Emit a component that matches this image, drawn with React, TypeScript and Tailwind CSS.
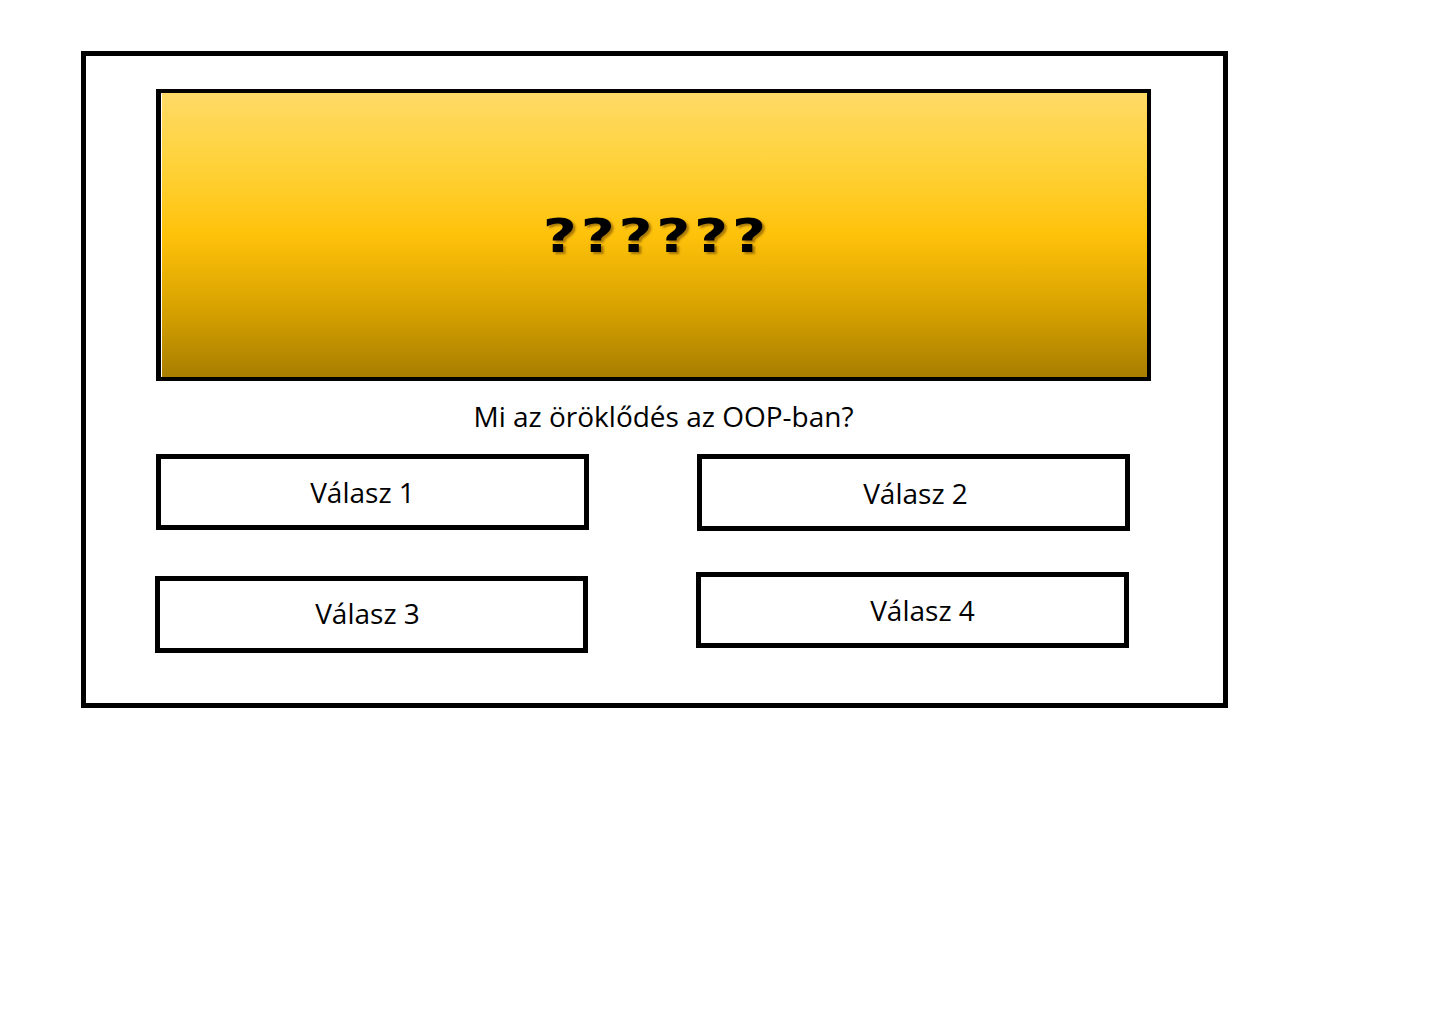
const answers = [
  { label: 'Válasz 1', box: 'w-[433px] h-[76px]', text: 'pr-[20px]' },
  { label: 'Válasz 2', box: 'w-[433px] h-[77px] ml-[108px]', text: 'pl-[4px]' },
];

const answers2 = [
  { label: 'Válasz 3', box: 'w-[433px] h-[77px] mt-[45px] ml-[-1px]', text: 'pr-[8px] pb-[3px]' },
  { label: 'Válasz 4', box: 'w-[433px] h-[76px] mt-[41px] ml-[108px]', text: 'pl-[20px]' },
];

function AnswerBox({ label, box, text }: { label: string; box: string; text: string }) {
  return (
    <button
      className={`${box} border-[5px] border-black bg-white flex items-center justify-center ${text} text-[28px] text-black font-['Open_Sans',sans-serif] cursor-pointer`}
    >
      {label}
    </button>
  );
}

export default function App() {
  return (
    <div className="min-h-[1024px] bg-white pl-[81px] pt-[51px]">
      {/* kvíz keret */}
      <div className="w-[1147px] h-[657px] border-[5px] border-black pl-[70px] pt-[33px]">
        {/* kérdés doboz */}
        <div className="w-[995px] h-[292px] border-4 border-l-[5px] border-black shadow-[inset_1px_0_0_#ffffff] bg-[linear-gradient(to_bottom,#ffda66_0%,#ffd23a_25%,#ffc20a_50%,#d9a300_75%,#a87e00_100%)] flex items-center justify-center pt-[2px]">
          <span className="inline-block pl-[4px] scale-x-[1.25] text-[47px] font-bold tracking-[3px] text-black font-['DejaVu_Sans',sans-serif] [text-shadow:2px_2px_2px_rgba(110,70,0,0.6)]">
            ??????
          </span>
        </div>

        <p className="w-[995px] mt-[16px] pl-[20px] text-center text-[28px] leading-[38px] text-black font-['Open_Sans',sans-serif]">
          Mi az öröklődés az OOP-ban?
        </p>

        <div className="flex items-start mt-[19px]">
          {answers.map((a) => (
            <AnswerBox key={a.label} {...a} />
          ))}
        </div>
        <div className="flex items-start">
          {answers2.map((a) => (
            <AnswerBox key={a.label} {...a} />
          ))}
        </div>
      </div>
    </div>
  );
}
